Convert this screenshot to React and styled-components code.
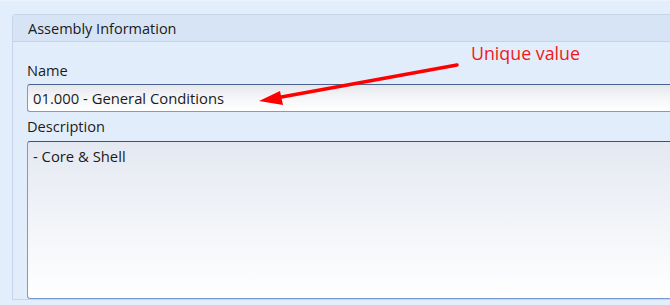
import styled, { createGlobalStyle } from 'styled-components'

const GlobalStyle = createGlobalStyle`
  html, body {
    margin: 0;
    padding: 0;
    background: #e3eefc;
    overflow: hidden;
  }
  body {
    font-family: "Open Sans", "Noto Sans", sans-serif;
    color: #1b1b1b;
  }
`

const Page = styled.div`
  position: relative;
  width: 670px;
  height: 305px;
  padding: 13px 0 0 12px;
  box-sizing: border-box;
  overflow: hidden;
  border-top: 1px solid #edf3fd;
`

const Panel = styled.section`
  width: 720px;
  border: 1px solid #c6d5e9;
  border-radius: 3px 0 0 0;
  background: #e2edfc;
`

const PanelHeader = styled.div`
  height: 26px;
  padding-left: 15px;
  display: flex;
  align-items: center;
  font-size: 14.5px;
  background: #d7e4f5;
  border-bottom: 1px solid #c3d3e8;
`

const PanelBody = styled.div`
  display: flex;
  flex-direction: column;
  padding: 18px 0 0 14px;
`

const Label = styled.label`
  display: block;
  font-size: 14.6px;
  line-height: 20px;
  margin-bottom: ${p => p.$gap || 4}px;
`

const Field = styled.div`
  box-sizing: border-box;
  height: ${p => p.$height}px;
  padding: ${p => p.$multi ? '4px 5px' : '0 5px'};
  display: flex;
  align-items: ${p => p.$multi ? 'flex-start' : 'center'};
  font-size: 14.8px;
  border: 1px solid #7b9bcf;
  border-top-color: ${p => p.$multi ? '#3f507c' : '#4c6391'};
  border-right: none;
  border-radius: 3px 0 0 3px;
  background: ${p => p.$multi
    ? 'linear-gradient(to bottom, #e4e8f1 0%, #f3f5f9 55%, #ffffff 100%)'
    : 'linear-gradient(to bottom, #e6e7ec 0%, #f4f5f7 45%, #ffffff 100%)'};
  margin-bottom: ${p => p.$after || 0}px;
`

const Note = styled.div`
  position: absolute;
  left: 471px;
  top: 40px;
  font-size: 17.8px;
  color: #f01818;
`

const ArrowSvg = styled.svg`
  position: absolute;
  left: 0;
  top: 0;
  pointer-events: none;
`

function Arrow() {
  return (
    <ArrowSvg width="670" height="305" viewBox="0 0 670 305">
      <line x1="457" y1="64" x2="276" y2="97" stroke="#ff0000" strokeWidth="3.5" strokeLinecap="round" />
      <polygon points="259,100 280,90 283,104" fill="#ff0000" />
    </ArrowSvg>
  )
}

export default function App() {
  return (
    <>
      <GlobalStyle />
      <Page>
        <Panel>
          <PanelHeader>Assembly Information</PanelHeader>
          <PanelBody>
            <Label>Name</Label>
            <Field $height={28} $after={4}>01.000 - General Conditions</Field>
            <Label $gap={5}>Description</Label>
            <Field $multi $height={158}>- Core &amp; Shell</Field>
          </PanelBody>
        </Panel>
        <Note>Unique value</Note>
        <Arrow />
      </Page>
    </>
  )
}
